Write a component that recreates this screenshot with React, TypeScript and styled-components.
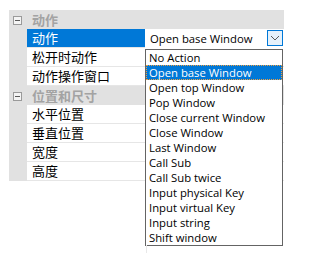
import React from "react";
import styled, { createGlobalStyle } from "styled-components";

const GlobalStyle = createGlobalStyle`
  html, body {
    margin: 0;
    background: #fff;
    font-family: "Noto Sans CJK SC", sans-serif;
  }
`;

const actions = [
  "No Action",
  "Open base Window",
  "Open top Window",
  "Pop Window",
  "Close current Window",
  "Close Window",
  "Last Window",
  "Call Sub",
  "Call Sub twice",
  "Input physical Key",
  "Input virtual Key",
  "Input string",
  "Shift window",
];

const groups = [
  { title: "动作", rows: ["动作", "松开时动作", "动作操作窗口"] },
  { title: "位置和尺寸", rows: ["水平位置", "垂直位置", "宽度", "高度"] },
];

const App = () => {
  return (
    <Page>
      <GlobalStyle />
      <Grid>
        {groups.map((group) => (
          <React.Fragment key={group.title}>
            <GroupRow>
              <Margin>
                <Expander width="9" height="9" viewBox="0 0 9 9">
                  <rect x="0.5" y="0.5" width="8" height="8" fill="#f4f4f4" stroke="#9a9a9a" />
                  <line x1="2" y1="4.5" x2="7" y2="4.5" stroke="#5a5a5a" />
                </Expander>
              </Margin>
              <GroupTitle>{group.title}</GroupTitle>
            </GroupRow>
            {group.rows.map((name, i) => {
              const active = group.title === "动作" && i === 0;
              return (
                <PropRow key={name}>
                  <Margin />
                  <NameCell $selected={active}>{name}</NameCell>
                  <ValueCell>
                    {active && (
                      <Combo>
                        <ComboText>Open base Window</ComboText>
                        <ArrowButton>
                          <svg width="10" height="6" viewBox="0 0 10 6">
                            <polyline points="1,1 5,5 9,1" fill="none" stroke="#5a5a5a" strokeWidth="1" />
                          </svg>
                        </ArrowButton>
                        <Popup>
                          {actions.map((a) => (
                            <Item key={a} $selected={a === "Open base Window"}>
                              {a}
                            </Item>
                          ))}
                        </Popup>
                      </Combo>
                    )}
                  </ValueCell>
                </PropRow>
              );
            })}
          </React.Fragment>
        ))}
      </Grid>
    </Page>
  );
};

const Page = styled.div`
  min-height: 253px;
  box-sizing: border-box;
  padding: 10px 0 0 9px;
`;

const Grid = styled.div`
  width: 275px;
  display: flex;
  flex-direction: column;
`;

const GroupRow = styled.div`
  display: flex;
  height: 19px;
  background: #e1e1e1;
`;

const Margin = styled.div`
  width: 18px;
  flex: none;
  display: flex;
  align-items: center;
  justify-content: center;
  background: #e1e1e1;
`;

const Expander = styled.svg`
  margin: 1px 0 0 -1px;
`;

const GroupTitle = styled.div`
  padding-left: 5px;
  font-size: 13px;
  line-height: 19px;
  font-weight: bold;
  color: #a3a3a3;
`;

const PropRow = styled.div`
  display: flex;
  height: 19px;
`;

const NameCell = styled.div<{ $selected?: boolean }>`
  width: 118px;
  flex: none;
  box-sizing: border-box;
  padding-left: 5px;
  font-size: 13px;
  line-height: 18px;
  color: ${(p) => (p.$selected ? "#fff" : "#000")};
  background: ${(p) => (p.$selected ? "#0078d7" : "#fff")};
  border-bottom: 1px solid #e6e6e6;
  white-space: nowrap;
`;

const ValueCell = styled.div`
  flex: 1;
  position: relative;
  border-bottom: 1px solid #e6e6e6;
`;

const Combo = styled.div`
  height: 19px;
  display: flex;
  align-items: center;
  justify-content: space-between;
  padding: 0 1px 0 5px;
  box-sizing: border-box;
  background: #fff;
`;

const ComboText = styled.span`
  font-family: "Open Sans", sans-serif;
  font-size: 11.3px;
  color: #000;
  margin-top: -1px;
`;

const ArrowButton = styled.div`
  width: 16px;
  height: 16px;
  box-sizing: border-box;
  border: 1px solid #0078d7;
  background: #e5f1fb;
  display: flex;
  align-items: center;
  justify-content: center;
  margin-top: -1px;
`;

const Popup = styled.div`
  position: absolute;
  left: 0;
  top: 20px;
  width: 138px;
  box-sizing: border-box;
  border: 1px solid #646464;
  background: #fff;
  display: flex;
  flex-direction: column;
  z-index: 2;

  &::after {
    content: "";
    position: absolute;
    left: 0;
    top: 100%;
    width: 1px;
    height: 12px;
    background: #e8e8e8;
  }
`;

const Item = styled.div<{ $selected?: boolean }>`
  height: 15px;
  flex: none;
  box-sizing: border-box;
  padding-left: 2px;
  font-family: "Open Sans", sans-serif;
  font-size: 11.3px;
  line-height: 13px;
  white-space: nowrap;
  color: ${(p) => (p.$selected ? "#fff" : "#000")};
  background: ${(p) => (p.$selected ? "#0078d7" : "#fff")};
  border: 1px ${(p) => (p.$selected ? "dotted #f0a040" : "solid transparent")};
`;

export default App;
